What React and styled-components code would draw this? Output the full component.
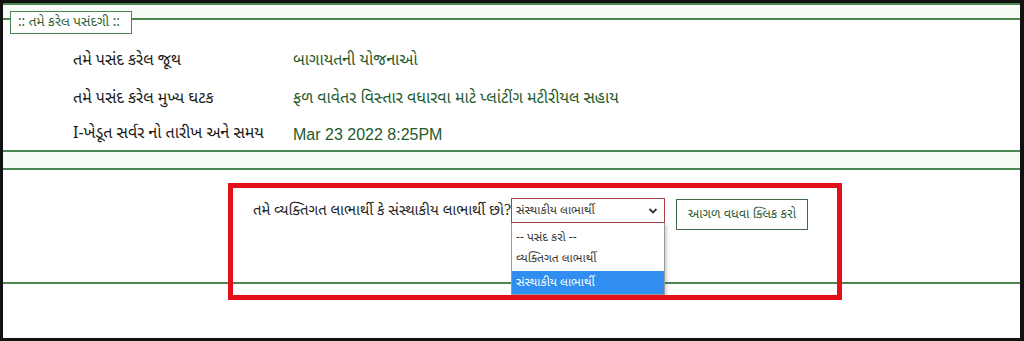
import React from "react";
import styled, { createGlobalStyle } from "styled-components";

const GlobalStyle = createGlobalStyle`
  html, body {
    margin: 0;
    padding: 0;
    background: #fff;
  }
  * { box-sizing: border-box; }
`;

const GUJ = `"Noto Sans Gujarati", "Lohit Gujarati", "Noto Sans", "DejaVu Sans", sans-serif`;
const GREEN = "#4a8753";

const Frame = styled.div`
  position: relative;
  width: 1024px;
  height: 341px;
  border-style: solid;
  border-color: #111;
  border-width: 3px 4px 3px 3px;
  background: #fff;
  display: flex;
  flex-direction: column;
  overflow: hidden;
  font-family: ${GUJ};
`;

const TopBand = styled.div`
  height: 15px;
  border-top: 2px solid ${GREEN};
  background: #f6fbf6;
`;

const Fieldset = styled.div`
  border-top: 2px solid ${GREEN};
  display: flex;
  flex-direction: column;
`;

const Legend = styled.div`
  align-self: flex-start;
  margin: -9px 0 0 7px;
  height: 23px;
  width: 122px;
  padding: 0 0 0 7px;
  border: 1px solid ${GREEN};
  background: #fff;
  color: #2f5f35;
  font-size: 13.5px;
  display: flex;
  align-items: center;
  white-space: nowrap;
`;

const InfoGrid = styled.div`
  display: grid;
  grid-template-columns: 220px 1fr;
  grid-template-rows: 37px 39px 31px;
  padding: 9px 0 0 70px;
  align-items: center;
`;

const Label = styled.div`
  color: #1a1a1a;
  font-size: 16px;
`;

const Value = styled.div`
  color: #245a2a;
  font-size: 16px;
  font-family: ${(p) => (p.$latin ? `"Liberation Sans", Arial, sans-serif` : GUJ)};
`;

const MidBand = styled.div`
  height: 20px;
  border-top: 2px solid ${GREEN};
  border-bottom: 2px solid ${GREEN};
  background: #f6fbf6;
`;

const FormSection = styled.div`
  height: 114px;
  border-bottom: 2px solid ${GREEN};
  padding: 28px 0 0 250px;
  display: flex;
  align-items: flex-start;
`;

const Question = styled.div`
  margin-top: 3px;
  color: #222;
  font-size: 14.8px;
  white-space: nowrap;
`;

const QMark = styled.span`
  font-family: "Liberation Serif", serif;
  font-size: 16px;
`;

const SelectWrap = styled.div`
  position: relative;
`;

const SelectBox = styled.div`
  width: 154px;
  height: 25px;
  border: 1px solid #a8414d;
  background: #fff;
  display: flex;
  align-items: center;
  justify-content: space-between;
  padding: 0 6px 0 4px;
  font-size: 12px;
  color: #333;
`;

const OptionList = styled.div`
  position: absolute;
  top: 25px;
  left: 0;
  width: 154px;
  background: #fff;
  border: 1px solid #9a9a9a;
  border-top: none;
  box-shadow: 2px 2px 3px rgba(0, 0, 0, 0.18);
  padding-top: 4px;
  z-index: 2;
`;

const Option = styled.div`
  height: ${(p) => (p.$active ? "23px" : "21px")};
  margin-top: ${(p) => (p.$active ? "2px" : "0")};
  padding: 0 4px;
  display: flex;
  align-items: center;
  font-size: 12px;
  color: ${(p) => (p.$active ? "#fff" : "#333")};
  background: ${(p) => (p.$active ? "#2f8ef0" : "transparent")};
`;

const Button = styled.div`
  margin: 1px 0 0 11px;
  width: 132px;
  height: 31px;
  border: 1.5px solid #3f6b47;
  background: #fff;
  color: #2d5a33;
  font-size: 12.7px;
  display: flex;
  align-items: center;
  justify-content: center;
`;

const Highlight = styled.div`
  position: absolute;
  left: 225px;
  top: 180px;
  width: 614px;
  height: 117px;
  border: 5px solid #e3101a;
  pointer-events: none;
  z-index: 3;
`;

const Chevron = () => (
  <svg width="10" height="8" viewBox="0 0 10 8">
    <path d="M1.5 2 L5 5.5 L8.5 2" fill="none" stroke="#333" strokeWidth="1.8" />
  </svg>
);

const rows = [
  ["તમે પસંદ કરેલ જૂથ", "બાગાયતની યોજનાઓ"],
  ["તમે પસંદ કરેલ મુખ્ય ઘટક", "ફળ વાવેતર વિસ્તાર વધારવા માટે પ્લાંટીંગ મટીરીયલ સહાય"],
  ["I-ખેડૂત સર્વર નો તારીખ અને સમય", "Mar 23 2022 8:25PM", true],
];

const App = () => {
  return (
    <>
      <GlobalStyle />
      <Frame>
        <TopBand />
        <Fieldset>
          <Legend>:: તમે કરેલ પસંદગી ::</Legend>
          <InfoGrid>
            {rows.map(([label, value, latin]) => (
              <React.Fragment key={label}>
                <Label>{label}</Label>
                <Value $latin={latin}>{value}</Value>
              </React.Fragment>
            ))}
          </InfoGrid>
        </Fieldset>
        <MidBand />
        <FormSection>
          <Question>
            તમે વ્યક્તિગત લાભાર્થી કે સંસ્થાકીય લાભાર્થી છો<QMark>?</QMark>
          </Question>
          <SelectWrap>
            <SelectBox>
              <span>સંસ્થાકીય લાભાર્થી</span>
              <Chevron />
            </SelectBox>
            <OptionList>
              <Option>-- પસંદ કરો --</Option>
              <Option>વ્યક્તિગત લાભાર્થી</Option>
              <Option $active>સંસ્થાકીય લાભાર્થી</Option>
            </OptionList>
          </SelectWrap>
          <Button>આગળ વધવા ક્લિક કરો</Button>
        </FormSection>
        <Highlight />
      </Frame>
    </>
  );
};

export default App;
